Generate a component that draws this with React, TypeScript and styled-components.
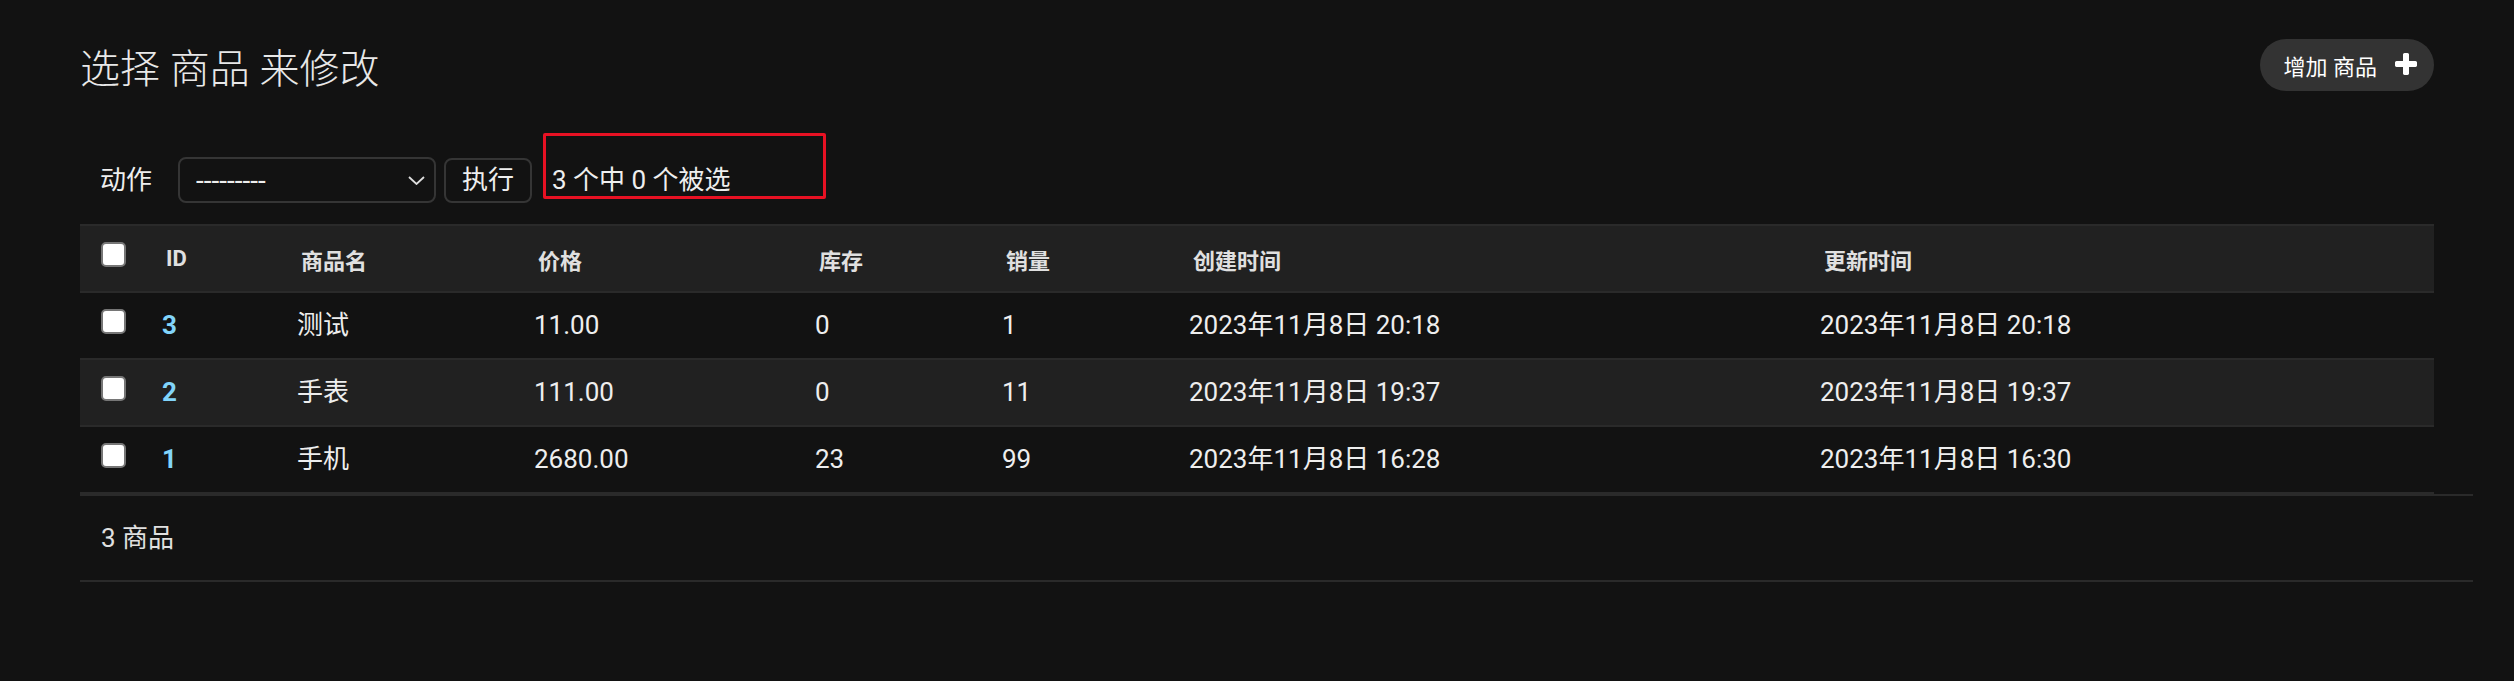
import React from "react";
import styled, { createGlobalStyle } from "styled-components";

const GlobalStyle = createGlobalStyle`
  html, body {
    margin: 0;
    padding: 0;
    background: #121212;
  }
  body {
    font-family: Roboto, "Noto Sans CJK SC", "Noto Sans", sans-serif;
    color: #eeeeee;
  }
  * { box-sizing: border-box; }
`;

const Page = styled.div`
  padding: 39px 80px 0 80px;
`;

const Header = styled.div`
  display: flex;
  justify-content: space-between;
  align-items: flex-start;
  height: 52px;
`;

const Title = styled.h1`
  margin: 5px 0 0 0;
  font-size: 40px;
  line-height: 52px;
  font-weight: 300;
  color: #e8e8e8;
`;

const AddLink = styled.a`
  display: flex;
  align-items: center;
  gap: 15px;
  height: 52px;
  padding: 0 14px 0 24px;
  border-radius: 26px;
  background: #333333;
  color: #ffffff;
  font-size: 22px;
  text-decoration: none;
  white-space: nowrap;
`;

const Actions = styled.div`
  display: flex;
  align-items: center;
  margin-top: 66px;
  height: 46px;
  padding-left: 20px;
`;

const ActionLabel = styled.label`
  font-size: 26px;
  line-height: 46px;
  color: #eeeeee;
`;

const SelectWrap = styled.div`
  position: relative;
  margin-left: 26px;
  width: 258px;
  height: 46px;
`;

const Select = styled.select`
  appearance: none;
  width: 100%;
  height: 100%;
  margin: 0;
  padding: 0 0 0 16px;
  background: #121212;
  color: #eeeeee;
  border: 2px solid #353535;
  border-radius: 8px;
  font-family: Roboto, "Noto Sans CJK SC", sans-serif;
  font-size: 28px;
  outline: none;
`;

const Chevron = styled.svg`
  position: absolute;
  right: 11px;
  top: 19px;
  pointer-events: none;
`;

const GoButton = styled.button`
  margin-left: 8px;
  height: 45px;
  padding: 0 16px;
  background: #121212;
  color: #eeeeee;
  border: 2px solid #353535;
  border-radius: 8px;
  font-family: Roboto, "Noto Sans CJK SC", sans-serif;
  font-size: 26px;
  line-height: 1;
`;

const Counter = styled.span`
  position: relative;
  margin-left: 20px;
  font-size: 26px;
  line-height: 46px;
  color: #eeeeee;
  white-space: pre;
`;

const Highlight = styled.span`
  position: absolute;
  left: -9px;
  top: -24px;
  width: 283px;
  height: 66px;
  border: 3px solid #e81123;
  border-radius: 2px;
  pointer-events: none;
`;

const Table = styled.table`
  margin-top: 21px;
  width: 100%;
  border-collapse: collapse;
  table-layout: fixed;
`;

const Col = styled.col<{ $w: number }>`
  width: ${(p) => p.$w}px;
`;

const HeadCell = styled.th<{ $center?: boolean }>`
  height: 67px;
  padding: 0 ${(p) => (p.$center ? 0 : 20)}px;
  background: #212121;
  border-top: 2px solid #2a2a2a;
  border-bottom: 2px solid #2a2a2a;
  color: #e0e0e0;
  font-size: 22px;
  font-weight: 700;
  text-align: ${(p) => (p.$center ? "center" : "left")};
  vertical-align: middle;
  white-space: nowrap;
`;

const Row = styled.tr<{ $alt: boolean }>`
  background: ${(p) => (p.$alt ? "#212121" : "#121212")};
`;

const Cell = styled.td<{ $center?: boolean }>`
  padding: 12px 16px;
  line-height: 41px;
  font-size: 26px;
  color: #eeeeee;
  border-bottom: 2px solid #2a2a2a;
  vertical-align: middle;
  text-align: ${(p) => (p.$center ? "center" : "left")};
  white-space: nowrap;
`;

const Check = styled.input`
  appearance: none;
  display: block;
  margin: 0 auto 8px auto;
  width: 25px;
  height: 25px;
  background: #ffffff;
  border: 2px solid #767676;
  border-radius: 5px;
`;

const IdLink = styled.a`
  color: #81d4fa;
  font-weight: 700;
  text-decoration: none;
`;

const Paginator = styled.p`
  margin: 0 -39px 0 0;
  height: 88px;
  padding: 0 21px;
  border-top: 2px solid #2a2a2a;
  border-bottom: 2px solid #2a2a2a;
  font-size: 26px;
  line-height: 84px;
  color: #e0e0e0;
`;

const PlusIcon = () => (
  <svg width="28" height="28" viewBox="0 0 1792 1792" aria-hidden="true">
    <path
      fill="#FFFFFF"
      d="M1600 736v192q0 40-28 68t-68 28h-416v416q0 40-28 68t-68 28h-192q-40 0-68-28t-28-68v-416h-416q-40 0-68-28t-28-68v-192q0-40 28-68t68-28h416v-416q0-40 28-68t68-28h192q40 0 68 28t28 68v416h416q40 0 68 28t28 68z"
    />
  </svg>
);

const columns = [
  { key: "cb", w: 66 },
  { key: "id", w: 135, label: "ID" },
  { key: "name", w: 237, label: "商品名" },
  { key: "price", w: 281, label: "价格" },
  { key: "stock", w: 187, label: "库存" },
  { key: "sales", w: 187, label: "销量" },
  { key: "created", w: 631, label: "创建时间" },
  { key: "updated", w: 630, label: "更新时间" },
];

const rows = [
  { id: 3, name: "测试", price: "11.00", stock: "0", sales: "1", created: "2023年11月8日 20:18", updated: "2023年11月8日 20:18" },
  { id: 2, name: "手表", price: "111.00", stock: "0", sales: "11", created: "2023年11月8日 19:37", updated: "2023年11月8日 19:37" },
  { id: 1, name: "手机", price: "2680.00", stock: "23", sales: "99", created: "2023年11月8日 16:28", updated: "2023年11月8日 16:30" },
];

export default function App() {
  return (
    <>
      <GlobalStyle />
      <Page>
        <Header>
          <Title>选择 商品 来修改</Title>
          <AddLink href="#">
            增加 商品
            <PlusIcon />
          </AddLink>
        </Header>

        <Actions>
          <ActionLabel>动作</ActionLabel>
          <SelectWrap>
            <Select defaultValue="">
              <option value="">---------</option>
            </Select>
            <Chevron width="17" height="9" viewBox="0 0 17 9">
              <path d="M1 1l7.5 7L16 1" fill="none" stroke="#dddddd" strokeWidth="1.8" />
            </Chevron>
          </SelectWrap>
          <GoButton type="button">执行</GoButton>
          <Counter>
            {"3 个中 0 个被选"}
            <Highlight />
          </Counter>
        </Actions>

        <Table>
          <colgroup>
            {columns.map((c) => (
              <Col key={c.key} $w={c.w} />
            ))}
          </colgroup>
          <thead>
            <tr>
              <HeadCell $center>
                <Check type="checkbox" />
              </HeadCell>
              {columns.slice(1).map((c) => (
                <HeadCell key={c.key}>{c.label}</HeadCell>
              ))}
            </tr>
          </thead>
          <tbody>
            {rows.map((r, i) => (
              <Row key={r.id} $alt={i % 2 === 1}>
                <Cell $center>
                  <Check type="checkbox" />
                </Cell>
                <Cell>
                  <IdLink href="#">{r.id}</IdLink>
                </Cell>
                <Cell>{r.name}</Cell>
                <Cell>{r.price}</Cell>
                <Cell>{r.stock}</Cell>
                <Cell>{r.sales}</Cell>
                <Cell>{r.created}</Cell>
                <Cell>{r.updated}</Cell>
              </Row>
            ))}
          </tbody>
        </Table>

        <Paginator>3 商品</Paginator>
      </Page>
    </>
  );
}
